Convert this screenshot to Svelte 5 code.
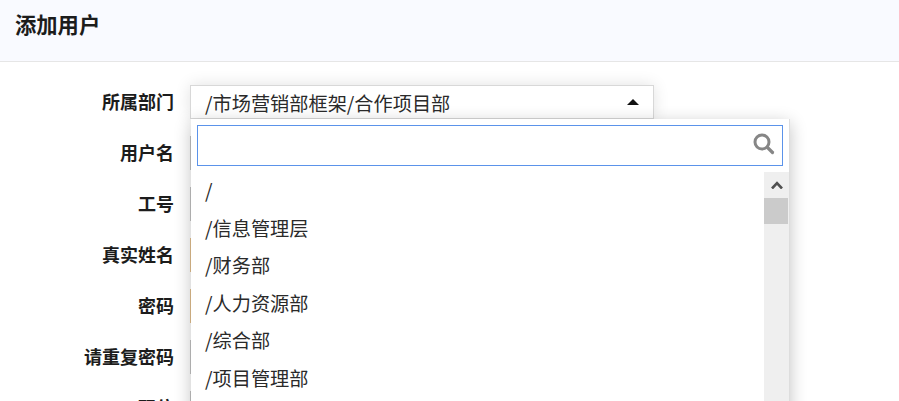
<script>
    const fields = [
        { label: "用户名" },
        { label: "工号" },
        { label: "真实姓名", required: true },
        { label: "密码", required: true },
        { label: "请重复密码" },
        { label: "职位", hint: "请选择职位" }
    ];

    const departments = ["/", "/信息管理层", "/财务部", "/人力资源部", "/综合部", "/项目管理部", "/市场营销部框架"];
</script>

<div class="page">
    <header class="head">
        <h1>添加用户</h1>
    </header>

    <form class="form">
        <div class="row">
            <span class="label">所属部门</span>
            <div class="select-wrap">
                <div class="select">
                    <span>/市场营销部框架/合作项目部</span>
                    <i class="caret"></i>
                </div>

                <div class="dropdown">
                    <div class="search">
                        <input type="text" aria-label="搜索" />
                        <svg width="22" height="22" viewBox="0 0 22 22" aria-hidden="true">
                            <circle cx="9" cy="9" r="7" fill="none" stroke="#868686" stroke-width="3" />
                            <path d="M14.5 14.5 L19.5 19.5" stroke="#868686" stroke-width="3.2" stroke-linecap="round" />
                        </svg>
                    </div>
                    <div class="list">
                        <ul>
                            {#each departments as dept}
                                <li>{dept}</li>
                            {/each}
                        </ul>
                        <div class="scrollbar">
                            <div class="arrow">
                                <svg width="12" height="8" viewBox="0 0 12 8" aria-hidden="true">
                                    <path d="M1 7.5 L6 2.2 L11 7.5" fill="none" stroke="#505050" stroke-width="2.6" />
                                </svg>
                            </div>
                            <div class="thumb"></div>
                        </div>
                    </div>
                </div>
            </div>
        </div>

        {#each fields as field}
            <div class="row">
                <span class="label">{field.label}</span>
                <input class="field" class:required={field.required} type="text" />
                {#if field.hint}
                    <span class="hint">{field.hint}</span>
                {/if}
            </div>
        {/each}
    </form>
</div>

<style>
    :global(body) {
        margin: 0;
        overflow: hidden;
        background: #fff;
    }

    .page {
        height: 401px;
        overflow: hidden;
        font-family: "Noto Sans CJK SC", "Liberation Sans", sans-serif;
        color: #222;
    }

    .head {
        height: 61px;
        background: #f9faff;
        border-bottom: 1px solid #e6e6e6;
        padding-left: 15px;
    }

    h1 {
        margin: 0;
        font-size: 21.3px;
        line-height: 48px;
        font-weight: 700;
        color: #1c1c1c;
    }

    .form {
        display: flex;
        flex-direction: column;
        gap: 17px;
        padding-top: 23px;
    }

    .row {
        display: flex;
        align-items: center;
        height: 34px;
    }

    .label {
        width: 174px;
        margin-right: 16px;
        padding-bottom: 3px;
        text-align: right;
        font-size: 18px;
        font-weight: 700;
        color: #1c1c1c;
    }

    .select-wrap {
        position: relative;
    }

    .select {
        box-sizing: border-box;
        display: flex;
        align-items: center;
        justify-content: space-between;
        width: 464px;
        height: 34px;
        padding: 2px 14px 0 14px;
        border: 1px solid #d8d8d8;
        background: #fff;
        font-size: 19.2px;
        color: #2a2a2a;
        box-shadow: 0 0 16px rgba(0, 0, 0, 0.12);
    }

    .caret {
        width: 0;
        height: 0;
        margin-top: -2px;
        border-left: 6px solid transparent;
        border-right: 6px solid transparent;
        border-bottom: 6px solid #111;
    }

    .dropdown {
        position: absolute;
        top: 34px;
        left: 1px;
        z-index: 5;
        box-sizing: border-box;
        width: 599px;
        height: 300px;
        padding: 6px 0 0;
        background: #fff;
        border-right: 1px solid #ddd;
        box-shadow: 0 4px 16px rgba(0, 0, 0, 0.24);
    }

    .search {
        position: relative;
        margin: 0 6px;
        height: 41px;
    }

    .search input {
        box-sizing: border-box;
        width: 100%;
        height: 100%;
        border: 1px solid #5b93ea;
        outline: none;
        padding: 0;
    }

    .search svg {
        position: absolute;
        top: 8px;
        right: 8px;
    }

    .list {
        display: flex;
        margin-top: 6px;
    }

    ul {
        flex: 1;
        list-style: none;
        margin: 0;
        padding: 0 0 0 14px;
    }

    li {
        height: 37.6px;
        line-height: 36.4px;
        font-size: 19.2px;
        color: #2a2a2a;
    }

    .scrollbar {
        width: 25px;
        height: 240px;
        background: #efefef;
    }

    .arrow {
        display: flex;
        justify-content: center;
        align-items: center;
        height: 26px;
    }

    .thumb {
        width: 24px;
        height: 26px;
        background: #cbcbcb;
    }

    .field {
        box-sizing: border-box;
        width: 464px;
        height: 34px;
        padding: 0;
        border: 1px solid #c4c4c4;
        background: #fff;
    }

    .field.required {
        border-color: #e3c08f;
    }

    .hint {
        margin-left: 165px;
        font-size: 14px;
        color: #d9542b;
        white-space: nowrap;
    }
</style>
